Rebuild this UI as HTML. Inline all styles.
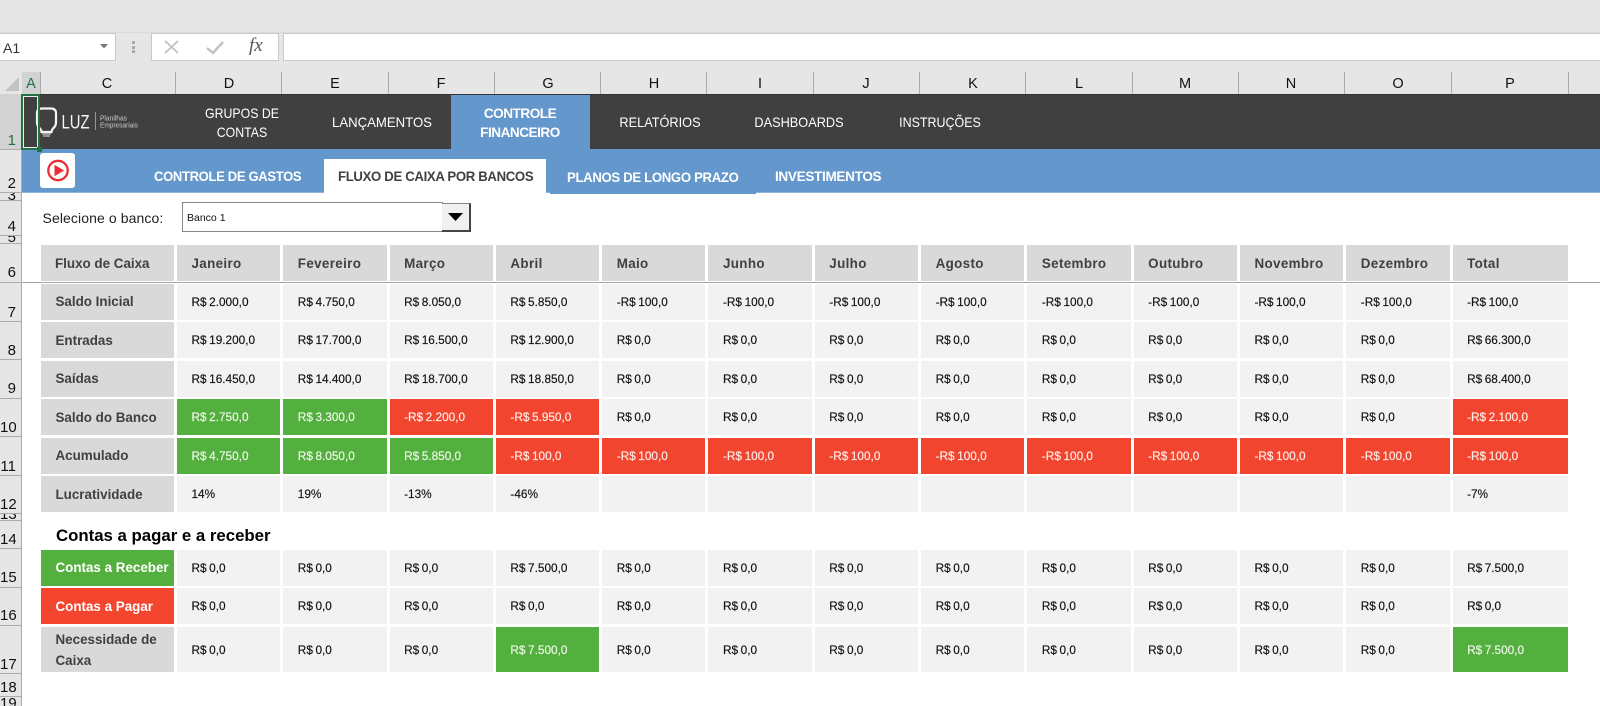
<!DOCTYPE html>
<html lang="pt">
<head>
<meta charset="utf-8">
<title>Fluxo de Caixa</title>
<style>
html,body{margin:0;padding:0;background:#fff}
body{width:1600px;height:706px;position:relative;overflow:hidden;font-family:"Liberation Sans",sans-serif}
.a{position:absolute;white-space:nowrap}
.b{position:absolute}
.ch{position:absolute;top:72px;height:22px;line-height:24px;font-size:14.500px;color:#111;text-align:center;width:40px}
.cs{position:absolute;top:72px;height:22px;width:1px;background:#ababab}
.rs{position:absolute;left:0;width:22px;height:1px;background:#ababab}
.rn{position:absolute;left:0;width:16px;text-align:right;font-size:15px;line-height:16px;color:#111;overflow:hidden}
.nav{position:absolute;color:#fff;font-size:14px;line-height:19px;text-align:center;white-space:nowrap;transform-origin:center}
.sub{position:absolute;color:#fff;font-size:14px;font-weight:bold;line-height:18px;white-space:nowrap;letter-spacing:-.35px;transform-origin:left center}
.grid{position:absolute;left:40.5px;display:grid;grid-template-columns:133.5px repeat(12,103.3px) 115px;column-gap:3px;row-gap:2.8px;font-size:11.800px;color:#111;word-spacing:-.7px;-webkit-text-stroke:.15px}
.grid div{background:#f2f2f2;display:flex;align-items:center;padding-left:14.5px;box-sizing:border-box;white-space:nowrap;overflow:hidden}
.grid div.h,.grid div.l{background:#d9d9d9;color:#404040;font-weight:bold;font-size:13.400px;word-spacing:0;-webkit-text-stroke:0}
.grid div.h~.h{letter-spacing:.35px}
.grid div.l{padding-left:15px}
.grid div.g{background:#54b03e;color:#eef8ea}
.grid div.r{background:#f2452f;color:#ffeee8}
.grid div.lg{background:#54b03e;color:#fff}
.grid div.lr{background:#f4462f;color:#fff}
</style>
</head>
<body>
<div class="b" style="left:0;top:0;width:1600px;height:94px;background:#e6e6e6"></div>
<div class="b" style="left:0;top:32px;width:1600px;height:1px;background:#dadada"></div>
<div class="b" style="left:0;top:33px;width:115px;height:26px;background:#fff;border:1px solid #c9c9c9;border-left:0"></div>
<div class="a" style="left:3px;top:38.500px;font-size:14px;line-height:18px;color:#333">A1</div>
<svg class="b" style="left:100px;top:44px" width="8" height="5"><path d="M0 0H8L4 4.5Z" fill="#777"/></svg>
<div class="b" style="left:132px;top:41px;width:3px;height:3px;background:#aaa"></div>
<div class="b" style="left:132px;top:46px;width:3px;height:3px;background:#aaa"></div>
<div class="b" style="left:132px;top:50px;width:3px;height:3px;background:#aaa"></div>
<div class="b" style="left:151px;top:33px;width:126px;height:26px;background:#fff;border:1px solid #c9c9c9"></div>
<svg class="b" style="left:163px;top:38px" width="90" height="18">
<path d="M2 3L15 15M15 3L2 15" stroke="#bdbdbd" stroke-width="1.6" fill="none"/>
<path d="M44 10L50 15L60 4" stroke="#c4c4c4" stroke-width="2.6" fill="none"/>
</svg>
<div class="a" style="left:249px;top:36px;font-family:'Liberation Serif',serif;font-style:italic;font-size:19px;line-height:20px;color:#555">fx</div>
<div class="b" style="left:283px;top:33px;width:1317px;height:26px;background:#fff;border:1px solid #c9c9c9;border-right:0"></div>

<svg class="b" style="left:4px;top:76px" width="16" height="16"><path d="M15 1V15H1Z" fill="#c2c2c2"/></svg>
<div class="b" style="left:22px;top:72px;width:18px;height:22px;background:#d2d2d2"></div>
<div class="ch" style="left:11px;color:#1f7244">A</div>
<div class="ch" style="left:87px">C</div>
<div class="ch" style="left:209px">D</div>
<div class="ch" style="left:315px">E</div>
<div class="ch" style="left:421px">F</div>
<div class="ch" style="left:528px">G</div>
<div class="ch" style="left:634px">H</div>
<div class="ch" style="left:740px">I</div>
<div class="ch" style="left:846px">J</div>
<div class="ch" style="left:953px">K</div>
<div class="ch" style="left:1059px">L</div>
<div class="ch" style="left:1165px">M</div>
<div class="ch" style="left:1271px">N</div>
<div class="ch" style="left:1378px">O</div>
<div class="ch" style="left:1490px">P</div>
<div class="cs" style="left:40px"></div>
<div class="cs" style="left:175px"></div>
<div class="cs" style="left:281px"></div>
<div class="cs" style="left:388px"></div>
<div class="cs" style="left:494px"></div>
<div class="cs" style="left:600px"></div>
<div class="cs" style="left:706px"></div>
<div class="cs" style="left:813px"></div>
<div class="cs" style="left:919px"></div>
<div class="cs" style="left:1025px"></div>
<div class="cs" style="left:1132px"></div>
<div class="cs" style="left:1238px"></div>
<div class="cs" style="left:1344px"></div>
<div class="cs" style="left:1451px"></div>
<div class="cs" style="left:1568px"></div>

<div class="b" style="left:0;top:94px;width:22px;height:612px;background:#e6e6e6;border-right:1px solid #ababab;box-sizing:border-box"></div>
<div class="b" style="left:0;top:94px;width:21px;height:55px;background:#d2d2d2"></div>
<div class="rn" style="top:133px;color:#1f7244">1</div>
<div class="rn" style="top:176px">2</div>
<div class="rn" style="top:193px;height:7px;line-height:6px">3</div>
<div class="rn" style="top:219px">4</div>
<div class="rn" style="top:236px;height:7px;line-height:4px">5</div>
<div class="rn" style="top:265px">6</div>
<div class="rn" style="top:305px">7</div>
<div class="rn" style="top:343px">8</div>
<div class="rn" style="top:381px">9</div>
<div class="rn" style="top:420px">10</div>
<div class="rn" style="top:459px">11</div>
<div class="rn" style="top:497px">12</div>
<div class="rn" style="top:513px;height:7px;line-height:4px">13</div>
<div class="rn" style="top:532px">14</div>
<div class="rn" style="top:570px">15</div>
<div class="rn" style="top:608px">16</div>
<div class="rn" style="top:657px">17</div>
<div class="rn" style="top:680px">18</div>
<div class="rn" style="top:697px;height:9px;line-height:14px">19</div>
<div class="rs" style="top:149px"></div>
<div class="rs" style="top:192px"></div>
<div class="rs" style="top:200px"></div>
<div class="rs" style="top:235px"></div>
<div class="rs" style="top:243px"></div>
<div class="rs" style="top:282px"></div>
<div class="rs" style="top:321px"></div>
<div class="rs" style="top:359px"></div>
<div class="rs" style="top:398px"></div>
<div class="rs" style="top:436px"></div>
<div class="rs" style="top:475px"></div>
<div class="rs" style="top:513px"></div>
<div class="rs" style="top:520px"></div>
<div class="rs" style="top:548px"></div>
<div class="rs" style="top:587px"></div>
<div class="rs" style="top:625px"></div>
<div class="rs" style="top:673px"></div>
<div class="rs" style="top:696px"></div>

<!-- dark nav -->
<div class="b" style="left:22px;top:94px;width:1578px;height:55px;background:#404040;border-top:1px solid #333;box-sizing:border-box"></div>
<div class="b" style="left:451px;top:95px;width:139px;height:54px;background:#6497cb"></div>
<div class="b" style="left:22px;top:149px;width:1578px;height:43px;background:#6497cb"></div>
<div class="b" style="left:22px;top:192px;width:1578px;height:1px;background:#8fb4da"></div>
<div class="b" style="left:550px;top:192px;width:206px;height:2px;background:#6497cb"></div>

<div class="nav" style="left:182px;top:104px;width:120px;transform:scaleX(.88)">GRUPOS DE<br>CONTAS</div>
<div class="nav" style="left:322px;top:113px;width:120px;transform:scaleX(.94)">LANÇAMENTOS</div>
<div class="nav" style="left:460px;top:104px;width:120px;font-weight:bold;letter-spacing:-.5px;transform:scaleX(.97)">CONTROLE<br>FINANCEIRO</div>
<div class="nav" style="left:600px;top:113px;width:120px;transform:scaleX(.91)">RELATÓRIOS</div>
<div class="nav" style="left:739px;top:113px;width:120px;transform:scaleX(.91)">DASHBOARDS</div>
<div class="nav" style="left:880px;top:113px;width:120px;transform:scaleX(.89)">INSTRUÇÕES</div>

<!-- logo -->
<svg class="b" style="left:30px;top:100px" width="115" height="42">
<path d="M12 8.500H21Q26 8.500 26 13.500V22Q26 26 23.500 28Q21.500 30 21.500 32H11.500Q11.500 30 9.500 28Q7 26 7 22V13.500Q7 8.500 12 8.500Z" fill="none" stroke="#f4f4f4" stroke-width="2.200"/>
<path d="M12 34H21M13 36H20" stroke="#c4c4c4" stroke-width="1.300"/>
<rect x="65" y="12" width="1" height="18" fill="#999"/>
<text x="31.500" y="28.500" font-family="Liberation Sans" font-size="19" fill="#f5f5f5" textLength="28" lengthAdjust="spacingAndGlyphs">LUZ</text>
<text x="70" y="20.500" font-family="Liberation Sans" font-size="7.500" fill="#c8c8c8" textLength="27" lengthAdjust="spacingAndGlyphs">Planilhas</text>
<text x="70" y="27.500" font-family="Liberation Sans" font-size="7.500" fill="#c8c8c8" textLength="38" lengthAdjust="spacingAndGlyphs">Empresariais</text>
</svg>

<!-- play button -->
<div class="b" style="left:40px;top:153px;width:35px;height:35px;background:#fff;border-radius:3px"></div>
<svg class="b" style="left:40px;top:153px" width="35" height="35">
<circle cx="18" cy="17.500" r="9.700" fill="none" stroke="#ee2c33" stroke-width="2.300"/>
<path d="M14.500 11.800V23.200L24 17.500Z" fill="#ee2c33"/>
</svg>

<!-- A1 selection -->
<div class="b" style="left:21px;top:94px;width:19px;height:56px;border:2px solid #217346;box-shadow:inset 0 0 0 1px #e8efe9;box-sizing:border-box"></div>
<div class="b" style="left:37px;top:147px;width:5px;height:5px;background:#217346"></div>

<!-- sub tabs -->
<div class="b" style="left:324px;top:159px;width:222px;height:34px;background:#fff"></div>
<div class="sub" style="left:154px;top:167px;transform:scaleX(.93)">CONTROLE DE GASTOS</div>
<div class="sub" style="left:338px;top:167px;color:#404040;transform:scaleX(.94)">FLUXO DE CAIXA POR BANCOS</div>
<div class="sub" style="left:567px;top:168px;transform:scaleX(.94)">PLANOS DE LONGO PRAZO</div>
<div class="sub" style="left:775px;top:167px;transform:scaleX(.97)">INVESTIMENTOS</div>

<!-- selector -->
<div class="a" style="left:42.500px;top:210px;font-size:14px;letter-spacing:.1px;line-height:16px;color:#222">Selecione o banco:</div>
<div class="b" style="left:182px;top:202px;width:261px;height:30px;background:#fff;border:1px solid #85858f;box-sizing:border-box"></div>
<div class="a" style="left:187px;top:211px;font-size:10.500px;line-height:14px;color:#111">Banco 1</div>
<div class="b" style="left:442px;top:203px;width:29px;height:29px;background:#f0f0f0;border-right:2px solid #444;border-bottom:2px solid #444;border-top:1px solid #85858f;box-sizing:border-box"></div>
<svg class="b" style="left:448px;top:213px" width="16" height="9"><path d="M0 0H15L7.500 8Z" fill="#000"/></svg>

<!-- freeze line -->
<div class="b" style="left:22px;top:282px;width:1578px;height:1px;background:#a6a6a6"></div>

<!-- main table -->
<div class="grid" style="top:245px;grid-template-rows:36px;">
<div class="h">Fluxo de Caixa</div><div class="h">Janeiro</div><div class="h">Fevereiro</div><div class="h">Março</div><div class="h">Abril</div><div class="h">Maio</div><div class="h">Junho</div><div class="h">Julho</div><div class="h">Agosto</div><div class="h">Setembro</div><div class="h">Outubro</div><div class="h">Novembro</div><div class="h">Dezembro</div><div class="h">Total</div>
</div>
<div class="grid" style="top:284px;grid-template-rows:repeat(6,35.7px)">
<div class="l">Saldo Inicial</div><div>R$ 2.000,0</div><div>R$ 4.750,0</div><div>R$ 8.050,0</div><div>R$ 5.850,0</div><div>-R$ 100,0</div><div>-R$ 100,0</div><div>-R$ 100,0</div><div>-R$ 100,0</div><div>-R$ 100,0</div><div>-R$ 100,0</div><div>-R$ 100,0</div><div>-R$ 100,0</div><div>-R$ 100,0</div>
<div class="l">Entradas</div><div>R$ 19.200,0</div><div>R$ 17.700,0</div><div>R$ 16.500,0</div><div>R$ 12.900,0</div><div>R$ 0,0</div><div>R$ 0,0</div><div>R$ 0,0</div><div>R$ 0,0</div><div>R$ 0,0</div><div>R$ 0,0</div><div>R$ 0,0</div><div>R$ 0,0</div><div>R$ 66.300,0</div>
<div class="l">Saídas</div><div>R$ 16.450,0</div><div>R$ 14.400,0</div><div>R$ 18.700,0</div><div>R$ 18.850,0</div><div>R$ 0,0</div><div>R$ 0,0</div><div>R$ 0,0</div><div>R$ 0,0</div><div>R$ 0,0</div><div>R$ 0,0</div><div>R$ 0,0</div><div>R$ 0,0</div><div>R$ 68.400,0</div>
<div class="l">Saldo do Banco</div><div class="g">R$ 2.750,0</div><div class="g">R$ 3.300,0</div><div class="r">-R$ 2.200,0</div><div class="r">-R$ 5.950,0</div><div>R$ 0,0</div><div>R$ 0,0</div><div>R$ 0,0</div><div>R$ 0,0</div><div>R$ 0,0</div><div>R$ 0,0</div><div>R$ 0,0</div><div>R$ 0,0</div><div class="r">-R$ 2.100,0</div>
<div class="l">Acumulado</div><div class="g">R$ 4.750,0</div><div class="g">R$ 8.050,0</div><div class="g">R$ 5.850,0</div><div class="r">-R$ 100,0</div><div class="r">-R$ 100,0</div><div class="r">-R$ 100,0</div><div class="r">-R$ 100,0</div><div class="r">-R$ 100,0</div><div class="r">-R$ 100,0</div><div class="r">-R$ 100,0</div><div class="r">-R$ 100,0</div><div class="r">-R$ 100,0</div><div class="r">-R$ 100,0</div>
<div class="l">Lucratividade</div><div>14%</div><div>19%</div><div>-13%</div><div>-46%</div><div></div><div></div><div></div><div></div><div></div><div></div><div></div><div></div><div>-7%</div>
</div>

<div class="a" style="left:56px;top:525.500px;font-size:16.800px;font-weight:bold;line-height:20px;color:#000">Contas a pagar e a receber</div>

<div class="grid" style="top:550px;grid-template-rows:35.7px 35.7px 45.400px">
<div class="l lg">Contas a Receber</div><div>R$ 0,0</div><div>R$ 0,0</div><div>R$ 0,0</div><div>R$ 7.500,0</div><div>R$ 0,0</div><div>R$ 0,0</div><div>R$ 0,0</div><div>R$ 0,0</div><div>R$ 0,0</div><div>R$ 0,0</div><div>R$ 0,0</div><div>R$ 0,0</div><div>R$ 7.500,0</div>
<div class="l lr">Contas a Pagar</div><div>R$ 0,0</div><div>R$ 0,0</div><div>R$ 0,0</div><div>R$ 0,0</div><div>R$ 0,0</div><div>R$ 0,0</div><div>R$ 0,0</div><div>R$ 0,0</div><div>R$ 0,0</div><div>R$ 0,0</div><div>R$ 0,0</div><div>R$ 0,0</div><div>R$ 0,0</div>
<div class="l" style="white-space:normal;line-height:21px">Necessidade de Caixa</div><div>R$ 0,0</div><div>R$ 0,0</div><div>R$ 0,0</div><div class="g">R$ 7.500,0</div><div>R$ 0,0</div><div>R$ 0,0</div><div>R$ 0,0</div><div>R$ 0,0</div><div>R$ 0,0</div><div>R$ 0,0</div><div>R$ 0,0</div><div>R$ 0,0</div><div class="g">R$ 7.500,0</div>
</div>
</body>
</html>
